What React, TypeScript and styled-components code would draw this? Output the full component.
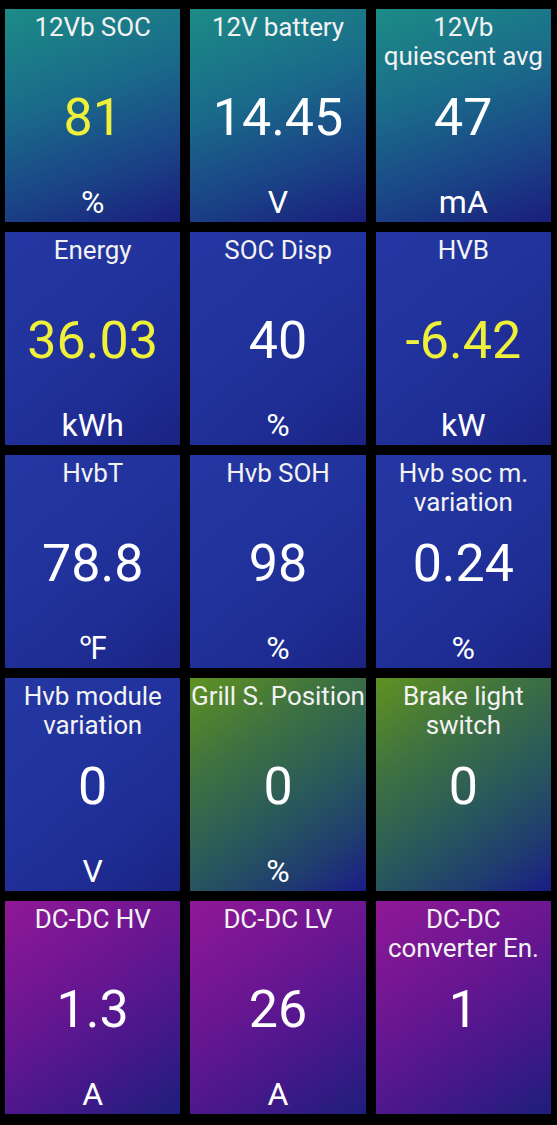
import React from "react";
import styled, { createGlobalStyle, css } from "styled-components";

const GlobalStyle = createGlobalStyle`
  html, body {
    margin: 0;
    padding: 0;
    background: #000;
  }
  body {
    font-family: Roboto, "Noto Sans", "Liberation Sans", sans-serif;
  }
`;

type Tone = "teal" | "blue" | "green" | "purple";

const tones: Record<Tone, ReturnType<typeof css>> = {
  teal: css`
    background: linear-gradient(160deg, #1c8c86 0%, #1a6a8a 40%, #1a4086 75%, #1a1e7c 100%);
  `,
  blue: css`
    background: linear-gradient(140deg, #2437a2 0%, #21329c 45%, #1e2c92 75%, #1a2382 100%);
  `,
  green: css`
    background: linear-gradient(145deg, #5f9220 0%, #3f7240 30%, #28585c 60%, #1f3c70 82%, #1a1c86 100%);
  `,
  purple: css`
    background: linear-gradient(145deg, #901896 0%, #6a1692 40%, #44188a 72%, #1d1e7c 100%);
  `,
};

const Board = styled.main`
  display: grid;
  grid-template-columns: repeat(3, minmax(0, 1fr));
  grid-auto-rows: 213px;
  gap: 10px;
  padding: 9px 6px 11px 5px;
`;

const Tile = styled.section<{ $tone: Tone }>`
  ${(p) => tones[p.$tone]}
  display: grid;
  grid-template-rows: minmax(0, 1fr) auto minmax(0, 1fr);
  color: #fff;
  text-align: center;
  overflow: hidden;
`;

const Label = styled.div`
  align-self: start;
  padding-top: 4px;
  font-size: 26px;
  line-height: 29px;
  color: #f2f2f2;
  white-space: pre-line;
  letter-spacing: -0.1px;
`;

const Value = styled.div<{ $highlight?: boolean }>`
  font-size: 52px;
  line-height: 1;
  margin-top: 4px;
  color: ${(p) => (p.$highlight ? "#eef03a" : "#ffffff")};
`;

const Unit = styled.div`
  align-self: end;
  font-size: 32px;
  line-height: 36px;
  padding-bottom: 2px;
`;

type Item = {
  label: string;
  value: string;
  unit: string;
  tone: Tone;
  highlight?: boolean;
};

const items: Item[] = [
  { label: "12Vb SOC", value: "81", unit: "%", tone: "teal", highlight: true },
  { label: "12V battery", value: "14.45", unit: "V", tone: "teal" },
  { label: "12Vb\nquiescent avg", value: "47", unit: "mA", tone: "teal" },
  { label: "Energy", value: "36.03", unit: "kWh", tone: "blue", highlight: true },
  { label: "SOC Disp", value: "40", unit: "%", tone: "blue" },
  { label: "HVB", value: "-6.42", unit: "kW", tone: "blue", highlight: true },
  { label: "HvbT", value: "78.8", unit: "\u2109", tone: "blue" },
  { label: "Hvb SOH", value: "98", unit: "%", tone: "blue" },
  { label: "Hvb soc m.\nvariation", value: "0.24", unit: "%", tone: "blue" },
  { label: "Hvb module\nvariation", value: "0", unit: "V", tone: "blue" },
  { label: "Grill S. Position", value: "0", unit: "%", tone: "green" },
  { label: "Brake light\nswitch", value: "0", unit: "", tone: "green" },
  { label: "DC-DC HV", value: "1.3", unit: "A", tone: "purple" },
  { label: "DC-DC LV", value: "26", unit: "A", tone: "purple" },
  { label: "DC-DC\nconverter En.", value: "1", unit: "", tone: "purple" },
];

export default function App() {
  return (
    <>
      <GlobalStyle />
      <Board>
        {items.map((it) => (
          <Tile key={it.label} $tone={it.tone}>
            <Label>{it.label}</Label>
            <Value $highlight={it.highlight}>{it.value}</Value>
            <Unit>{it.unit}</Unit>
          </Tile>
        ))}
      </Board>
    </>
  );
}
